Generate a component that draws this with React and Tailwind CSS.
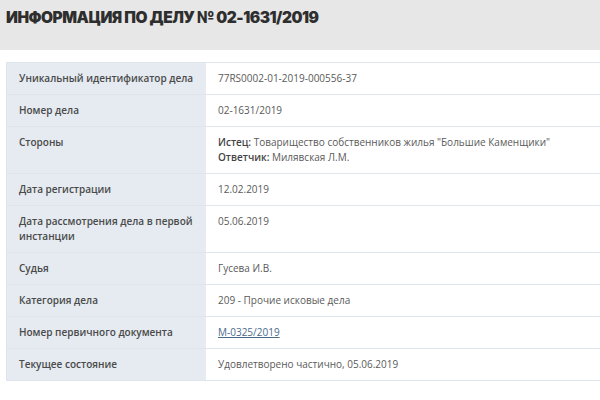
const rows = [
  { label: "Уникальный идентификатор дела", value: "77RS0002-01-2019-000556-37" },
  { label: "Номер дела", value: "02-1631/2019" },
  {
    label: "Стороны",
    value: (
      <>
        <div>
          <span className="font-semibold text-[#444]">Истец:</span> Товарищество собственников жилья "Большие Каменщики"
        </div>
        <div>
          <span className="font-semibold text-[#444]">Ответчик:</span> Милявская Л.М.
        </div>
      </>
    ),
  },
  { label: "Дата регистрации", value: "12.02.2019" },
  { label: "Дата рассмотрения дела в первой инстанции", value: "05.06.2019" },
  { label: "Судья", value: "Гусева И.В." },
  { label: "Категория дела", value: "209 - Прочие исковые дела" },
  {
    label: "Номер первичного документа",
    value: <span className="underline text-[#4a6a8a]">М-0325/2019</span>,
  },
  { label: "Текущее состояние", value: "Удовлетворено частично, 05.06.2019" },
];

export default function App() {
  return (
    <div className="w-[600px] h-[400px] overflow-hidden bg-white font-['Open_Sans',sans-serif]">
      <header className="h-[50px] bg-[#e7e7e7] px-[6px] pt-[8px]">
        <h1 className="font-['Inter',sans-serif] font-black text-[15.5px] leading-[20px] text-[#2e2e2e] tracking-[-0.5px]">
          ИНФОРМАЦИЯ ПО ДЕЛУ № 02-1631/2019
        </h1>
      </header>
      <main className="pt-[12px] pl-[6px]">
        <div className="border-t border-l border-[#dfe5ec]">
          {rows.map((row) => (
            <div key={row.label} className="flex border-b border-[#dfe5ec]">
              <div className="w-[199px] shrink-0 bg-[#e5ebf1] pl-[12px] pr-[8px] py-[8px] text-[10px] leading-[15px] font-semibold text-[#4a4a4a]">
                {row.label}
              </div>
              <div className="flex-1 pl-[12px] py-[8px] text-[10px] leading-[15px] text-[#5a5a5a]">
                {row.value}
              </div>
            </div>
          ))}
        </div>
      </main>
    </div>
  );
}
